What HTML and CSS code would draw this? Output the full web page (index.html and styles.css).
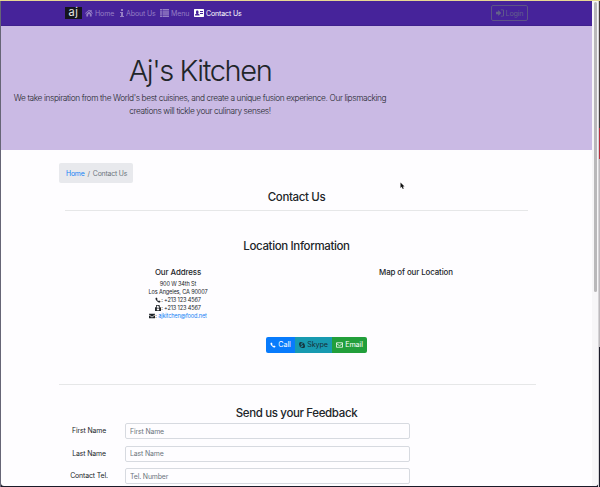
FILE: index.html
```html
<!DOCTYPE html>
<html lang="en">
<head>
<meta charset="utf-8">
<title>Aj's Kitchen</title>
<link rel="stylesheet" href="styles.css">
</head>
<body>
<svg class="sprite" aria-hidden="true">
<symbol id="phone" viewBox="0 0 16 16"><path d="M4 1 1.500 2.500C0 7 8 15.500 13 14.500L15 12 11 9 9 10.500C7.500 10 6 8.500 5.500 7L7 5Z"/></symbol>
</svg>
<div class="window">
<div class="page">
<nav class="navbar">
<a class="logo">aj</a>
<a class="link home"><svg viewBox="0 0 18 16"><path d="M0 8.500 9 .5l3 2.700V1h3v5l3 2.500-1.200 1.300L9 3 1.200 9.800ZM3 10l6-5.300L15 10v6h-4v-5H7v5H3Z"/></svg><span>Home</span></a>
<a class="link about"><svg viewBox="0 0 8 16"><path d="M2 0h4v4H2ZM0 6h6v8h2v2H0v-2h2V8H0Z"/></svg><span>About Us</span></a>
<a class="link menu"><svg viewBox="0 0 18 16"><path d="M0 0h4v3H0ZM5 0h13v3H5ZM0 4.300h4v3H0ZM5 4.300h13v3H5ZM0 8.600h4v3H0ZM5 8.600h13v3H5ZM0 13h4v3H0ZM5 13h13v3H5Z"/></svg><span>Menu</span></a>
<a class="link contact active"><svg viewBox="0 0 20 16"><path fill-rule="evenodd" d="M1 0h18l1 1v14l-1 1H1l-1-1V1ZM4 5v3l1 1-3 2v2h9v-2L8 9l1-1V5L8 3H5ZM12 4v2h6V4ZM12 8v2h6V8Z"/></svg><span>Contact Us</span></a>
<button class="login"><svg viewBox="0 0 18 16"><path d="M0 5h5V1l7 7-7 7v-4H0ZM11 0h4q3 0 3 3v10q0 3-3 3h-4v-2h4q1 0 1-1V3q0-1-1-1h-4Z"/></svg><span>Login</span></button>
</nav>
<header class="hero">
<h1>Aj's Kitchen</h1>
<p><span class="line1">We take inspiration from the World's best cuisines, and create a unique fusion experience. Our lipsmacking</span><br><span class="line2">creations will tickle your culinary senses!</span></p>
</header>
<main>
<ol class="breadcrumb"><li class="crumb">Home</li><li>/</li><li>Contact Us</li></ol>
<h3 class="title">Contact Us</h3>
<hr class="rule">
<h3 class="location">Location Information</h3>
<section class="columns">
<div class="address">
<h5>Our Address</h5>
<p>900 W 34th St</p>
<p>Los Angeles, CA 90007</p>
<p><svg viewBox="0 0 16 16"><use href="#phone"/></svg>: +213 123 4567</p>
<p><svg viewBox="0 0 16 16"><path fill-rule="evenodd" d="M3 0h8l2 2v4h2l1 1v9H0V6h3ZM5 2v5h6V4H9V2ZM5 9v5h6V9Z"/></svg>: +213 123 4567</p>
<p><svg viewBox="0 0 16 16"><path d="M0 2h16v2L8 10 0 4ZM0 6l8 6 8-6v8H0Z"/></svg>: <a class="mail">ajkitchen@food.net</a></p>
</div>
<div class="map"><h5>Map of our Location</h5></div>
</section>
<div class="buttons">
<a class="call"><svg viewBox="0 0 16 16"><use href="#phone"/></svg><span>Call</span></a>
<a class="skype"><svg viewBox="0 0 16 16"><path fill-rule="evenodd" d="M5 0q2 0 3 1 7 0 7 7 1 1 1 3 0 5-5 5-2 0-3-1-7 0-7-7-1-1-1-3Q0 0 5 0ZM4 5q0 3 4 4 2 .5 1 1.500-2 1-4-1L4 11q1 2 4 2 4 0 4-3 0-2-4-3-2-.5-1-1.500 2-1 3 .5L12 5q-1-2-4-2-4 0-4 2Z"/></svg><span>Skype</span></a>
<a class="email"><svg viewBox="0 0 18 16"><path class="outline" d="M1 2h16v12H1ZM1 4l8 6 8-6"/></svg><span>Email</span></a>
</div>
<hr class="rule wide">
<h3 class="feedback">Send us your Feedback</h3>
<form>
<label for="first">First Name</label><input id="first" placeholder="First Name">
<label for="last">Last Name</label><input id="last" placeholder="Last Name">
<label for="tel">Contact Tel.</label><input id="tel" placeholder="Tel. Number">
</form>
</main>
</div>
<div class="scrollbar"><div class="thumb"></div></div>
</div>
<svg class="cursor" viewBox="0 0 10 16"><path d="M1 1v11l2.500-2.500L5.500 14l2-1-2-4H9Z"/></svg>
</body>
</html>
```
FILE: styles.css
```css
* { box-sizing: border-box; }
body {
  margin: 0;
  width: 600px;
  height: 487px;
  overflow: hidden;
  padding: 1px 2px 1px 1px;
  background: linear-gradient(#e6d894 0 1px, transparent 1px),
    linear-gradient(90deg, #666576 0 1px, transparent 1px 598px, #d5d3d6 598px 599px, transparent 599px),
    linear-gradient(#443b3b 0 128px, #b92d3c 128px 159px, #bcb9bd 159px 347px, #1b1b29 347px);
  font: 6.900px/1.2 Inter, "Liberation Sans", sans-serif;
  letter-spacing: -.12px;
  color: #212529;
}
h1, h3, h5, p, ol { margin: 0; padding: 0; }
svg { fill: currentColor; flex: none; }
.sprite { display: none; }
.window { display: flex; height: 485px; background: #fefdff; border-radius: 0 0 3px 3px; overflow: hidden; }
.page { width: 591px; overflow: hidden; }
.scrollbar { width: 6px; padding: 1px 1px 0 2px; background: #f7f6f8; }
.thumb { width: 3px; height: 290px; border-radius: 2px; background: #b9b8ba; }

.navbar { height: 25px; display: flex; align-items: center; padding-left: 64px; background: #46239a; border-bottom: 1px solid #3f208d; color: #957fc4; }
.logo { width: 17px; height: 12px; margin-right: 3px; background: #15151e; color: #e6e6e6; font-size: 11px; line-height: 10px; text-align: center; letter-spacing: .5px; }
.link { display: flex; align-items: center; gap: 2px; height: 12px; white-space: nowrap; font-size: 7px; }
.link span { padding-top: 2px; }
.link svg { width: 8px; height: 8px; }
.home { width: 35px; }
.about { width: 40px; }
.about svg { width: 4px; }
.menu { width: 34px; }
.menu svg { width: 9px; }
.contact { width: 50px; }
.contact svg { width: 10px; height: 8px; }
.active { color: #fff; }
.login { display: flex; align-items: center; justify-content: center; gap: 2px; width: 37px; height: 16px; margin-left: 247px; padding: 0; border: 1px solid #5d5387; border-radius: 2px; background: none; color: #63618a; font: 7.200px Inter, sans-serif; letter-spacing: -.17px; }
.login svg { width: 8px; height: 8px; }

.hero { height: 124px; padding-top: 27px; background: #cabae4; }
.hero h1 { width: 398px; text-align: center; font-size: 29px; line-height: 36px; font-weight: 300; letter-spacing: -1.400px; }
.hero p { width: 398px; padding-top: 3px; text-align: center; font-size: 8.300px; line-height: 12.500px; font-weight: 350; white-space: nowrap; }
.line1, .line2 { letter-spacing: -.37px; }

.breadcrumb { display: flex; align-items: center; gap: 3px; width: 74px; height: 20px; margin: 13px 0 0 58px; padding: 2px 0 0 7px; border-radius: 2px; background: #e8e9ed; color: #6c757d; list-style: none; white-space: nowrap; letter-spacing: -.2px; }
.crumb, .mail { color: #1683f5; }
h3 { width: 591px; text-align: center; font-size: 11.500px; line-height: 14px; font-weight: 500; letter-spacing: -.36px; }
.title { margin-top: 7px; }
.rule { width: 463px; height: 1px; margin: 6px 0 0 64px; border: 0; background: #e6e7e8; }
.location { margin-top: 28px; }
.columns { display: flex; height: 83px; padding: 14px 0 0 58px; }
.columns > div { width: 238px; text-align: center; }
h5 { margin: 0 0 3px; font-size: 7.900px; line-height: 10px; font-weight: 500; letter-spacing: -.1px; }
.address p { font-size: 5.600px; line-height: 8px; letter-spacing: -.15px; }
.address svg { width: 6px; height: 6px; vertical-align: -1px; }
.buttons { display: flex; width: 101px; height: 16px; margin: 1px 0 0 265px; border-radius: 2px; overflow: hidden; }
.buttons a { display: flex; align-items: center; justify-content: center; gap: 2px; color: #fff; font-size: 7.200px; }
.buttons svg { width: 6px; height: 6px; }
.call { width: 29px; background: #087bfc; }
.buttons .skype { width: 37px; background: #189ab0; color: #172f38; }
.email { width: 35px; background: #229f3b; }
.buttons .email svg { width: 7px; }
.outline { fill: none; stroke: currentColor; stroke-width: 2; }
.wide { width: 477px; margin: 31px 0 0 58px; }
.feedback { margin-top: 21px; }
form { display: grid; grid-template-columns: 60px 285px; grid-auto-rows: 16px; gap: 6.500px 6px; margin: 3px 0 0 58px; }
label { line-height: 16px; text-align: center; }
input { width: 285px; height: 16px; padding: 0 4px; border: 1px solid #d7dae0; border-radius: 2px; background: transparent; font: 6.900px Inter, sans-serif; letter-spacing: -.13px; }
input::placeholder { color: #6c757d; opacity: 1; }
.cursor { position: absolute; left: 400px; top: 182px; width: 5px; height: 8px; fill: #111; }
```
